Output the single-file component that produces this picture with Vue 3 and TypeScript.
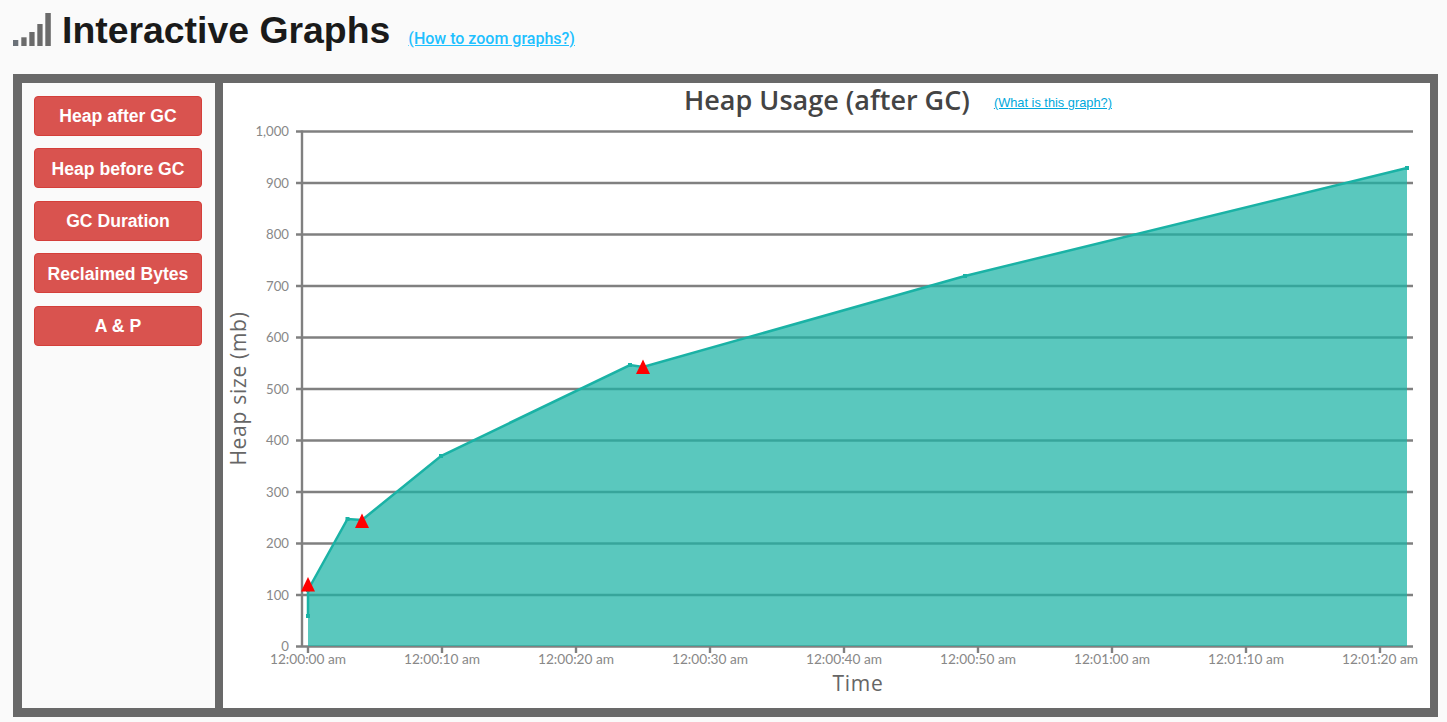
<template>
  <div class="page">
    <header class="page-header">
      <svg class="signal-icon" width="38" height="34" viewBox="0 0 38 34">
        <rect x="0" y="27" width="5.3" height="6" fill="#6b7178" />
        <rect x="8.3" y="24.3" width="5.3" height="8.7" fill="#6b6b6b" />
        <rect x="16.3" y="19" width="5.3" height="14" fill="#6b6b6b" />
        <rect x="24.3" y="11" width="5.3" height="22" fill="#6b6b6b" />
        <rect x="32.3" y="0" width="5.5" height="33" fill="#6b6b6b" />
      </svg>
      <h1>Interactive Graphs</h1>
      <a class="zoom-link" href="#">(How to zoom graphs?)</a>
    </header>

    <section class="panel">
      <aside class="sidebar">
        <button v-for="label in buttons" :key="label" type="button">{{ label }}</button>
      </aside>

      <main class="chart-area">
        <div class="chart-title">
          <h2>Heap Usage (after GC)</h2>
          <a href="#">(What is this graph?)</a>
        </div>

        <svg class="chart" width="1207" height="600" viewBox="223 109 1207 600">
          <!-- grid -->
          <line
            v-for="tick in yTicks"
            :key="tick.label"
            class="grid"
            x1="296"
            x2="1413"
            :y1="tick.y"
            :y2="tick.y"
          />
          <line class="grid" x1="302" x2="302" y1="130.5" y2="647" />
          <line
            v-for="tick in xTicks"
            :key="tick.label"
            class="grid"
            :x1="tick.x"
            :x2="tick.x"
            y1="646"
            y2="653"
          />

          <!-- series -->
          <polygon class="area" :points="areaPoints" />
          <polyline class="series" :points="linePoints" />
          <rect
            v-for="p in data"
            :key="p[0] + '-' + p[1]"
            class="dot"
            :x="p[0] - 2"
            :y="p[1] - 2"
            width="4"
            height="4"
          />
          <polygon v-for="m in markers" :key="m" class="marker" :points="m" />

          <!-- labels -->
          <text
            v-for="tick in yTicks"
            :key="tick.label"
            class="tick"
            text-anchor="end"
            x="289"
            :y="tick.y + 4.5"
          >{{ tick.label }}</text>
          <text
            v-for="tick in xTicks"
            :key="tick.label"
            class="tick tick-x"
            text-anchor="middle"
            :x="tick.x"
            y="664"
          >{{ tick.label }}</text>
          <text class="axis-title" text-anchor="middle" x="858" y="691">Time</text>
          <text
            class="axis-title"
            text-anchor="middle"
            transform="translate(246 388.5) rotate(-90)"
          >Heap size (mb)</text>
        </svg>
      </main>
    </section>
  </div>
</template>

<script setup lang="ts">
const buttons = ['Heap after GC', 'Heap before GC', 'GC Duration', 'Reclaimed Bytes', 'A & P']

const yLabels = ['1,000', '900', '800', '700', '600', '500', '400', '300', '200', '100', '0']
const yTicks = yLabels.map((label, i) => ({ label, y: 131.5 + i * 51.5 }))

const xLabels = [
  '12:00:00 am',
  '12:00:10 am',
  '12:00:20 am',
  '12:00:30 am',
  '12:00:40 am',
  '12:00:50 am',
  '12:01:00 am',
  '12:01:10 am',
  '12:01:20 am',
]
const xTicks = xLabels.map((label, i) => ({ label, x: 308 + i * 134 }))

// pixel positions of the GC events
const data: [number, number][] = [
  [308, 616],
  [308, 590],
  [347.5, 519],
  [362, 520],
  [441, 456],
  [630, 365],
  [643, 367],
  [965, 276],
  [1407, 168],
]

const linePoints = data.map((p) => p.join(',')).join(' ')
const areaPoints = `${linePoints} 1407,646 308,646`

function triangle(x: number, top: number): string {
  return `${x},${top} ${x + 7},${top + 14.5} ${x - 7},${top + 14.5}`
}
const markers = [triangle(308, 577), triangle(362, 513.5), triangle(643, 359.5)]
</script>

<style>
body {
  background: #fafafa;
}
</style>

<style scoped>
.page {
  height: 722px;
  box-sizing: border-box;
  padding: 0 9px 5px 13px;
  display: flex;
  flex-direction: column;
  overflow: hidden;
}

.page-header {
  height: 74px;
  flex: none;
  display: flex;
  align-items: flex-start;
  padding-top: 13px;
  box-sizing: border-box;
}

.signal-icon {
  flex: none;
}

h1 {
  margin: -3px 0 0 11px;
  font: bold 37.4px/40px "Liberation Sans", Arial, sans-serif;
  color: #1a1a1a;
}

.zoom-link {
  margin: 17px 0 0 18px;
  font: 500 16px/18px Roboto, sans-serif;
  color: #1ec0ff;
}

.panel {
  flex: 1;
  display: flex;
  gap: 8px;
  background: #696969;
  padding: 9px 8px 9px 9px;
  min-height: 0;
}

.sidebar {
  width: 193px;
  flex: none;
  box-sizing: border-box;
  background: #fafafa;
  padding: 12.8px 13px 0 12px;
  display: flex;
  flex-direction: column;
  gap: 12.5px;
}

.sidebar button {
  height: 40px;
  flex: none;
  border: 1px solid #d43f3a;
  border-radius: 4px;
  background: #d9534f;
  color: #fff;
  font: bold 17.6px "Liberation Sans", Arial, sans-serif;
  padding: 2px 0 0;
}

.chart-area {
  flex: 1;
  background: #fff;
  min-width: 0;
  display: flex;
  flex-direction: column;
}

.chart-title {
  height: 26px;
  flex: none;
  display: flex;
  align-items: flex-start;
  padding-left: 461px;
}

.chart-title h2 {
  margin: -1px 0 0;
  font: 600 27px/36px "Open Sans", sans-serif;
  color: #444;
}

.chart-title a {
  margin: 12px 0 0 24px;
  font: 12.8px/16px "Liberation Sans", Arial, sans-serif;
  color: #00a8dc;
}

.chart {
  display: block;
  flex: none;
}

.grid {
  stroke: #808080;
  stroke-width: 2.4;
}

.area {
  fill: rgba(26, 179, 165, 0.72);
}

.series {
  fill: none;
  stroke: #1ab2a5;
  stroke-width: 2.5;
}

.dot {
  fill: #1ab2a5;
}

.marker {
  fill: #f00;
}

.tick {
  font: 13.2px Lato, sans-serif;
  fill: #888;
}

.tick-x {
  font-size: 13.7px;
}

.axis-title {
  font: 21px "Open Sans", sans-serif;
  letter-spacing: 0.7px;
  fill: #666;
}
</style>
